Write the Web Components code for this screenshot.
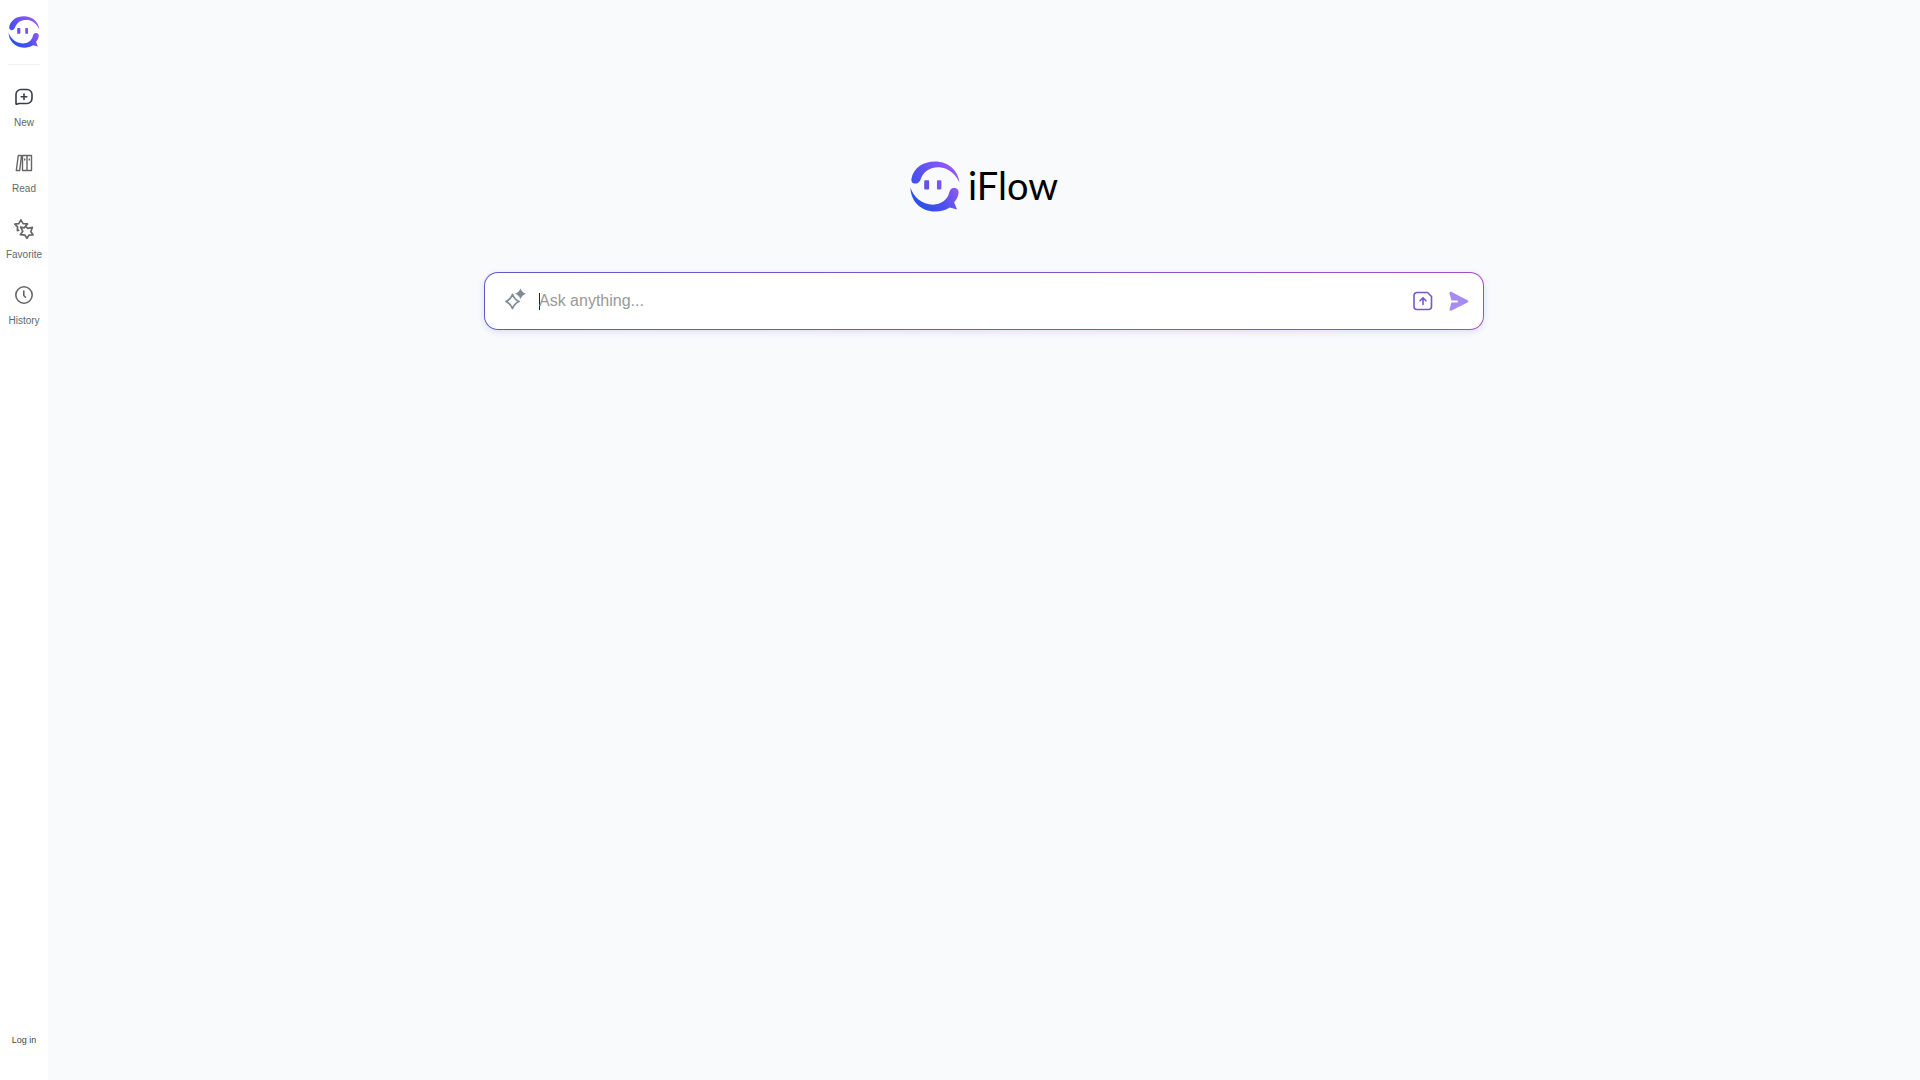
<!DOCTYPE html>
<html lang="en">
<head>
<meta charset="utf-8">
<title>iFlow</title>
<style>
 body {
  margin: 0;
  background: #f8fafc;
  color: #666;
  font-family: "Liberation Sans", Arial, sans-serif;
 }
</style>
</head>
<body>
<app-shell>
 <side-bar slot="side">
  <side-item label="New">
   <svg viewBox="0 0 20 20" fill="none" stroke="#3b3d45" stroke-width="1.6" stroke-linecap="round" stroke-linejoin="round"><path d="M2 17V7.500a5 5 0 0 1 5-5h6a5 5 0 0 1 5 5v4a5 5 0 0 1-5 5H4.500Q3.500 17.500 2 17zM10 7v5.500M7.200 9.700h5.600"/></svg>
  </side-item>
  <side-item label="Read">
   <svg viewBox="0 0 20 20" fill="none" stroke="#666" stroke-width="1.4" stroke-linejoin="round"><path d="M4.300 2.500h3.200L5.700 17.500H2.300zM8.500 2.500h4.500v15H8.500zM13 2.500h4.500v15H13z"/><path d="M10.700 5.500v2M15.300 5.500v2"/></svg>
  </side-item>
  <side-item label="Favorite">
   <svg viewBox="0 0 20 20" fill="none" stroke="#666" stroke-width="1.7" stroke-linejoin="round"><path d="M5.300 11 3.400 11.600 3.500 7.800.8 5.200l3.900-.6L6.900 1l2.200 3.600 4.400.3-2 2.400"/><path d="m11.500 7.300 2.300 2 4.600-1-1.600 4.400 2.300 3.200-4.200.3-1.800 3.200-2.300-3.300-4.500-.4 2.500-3.400-2.200-4.200 3.500.8z"/></svg>
  </side-item>
  <side-item label="History">
   <svg viewBox="0 0 20 20" fill="none" stroke="#666" stroke-width="1.6" stroke-linecap="round" stroke-linejoin="round"><circle cx="10" cy="10" r="8.200"/><path d="M9.800 6v4.500l1.700 1.700"/></svg>
  </side-item>
 </side-bar>
 <brand-logo>iFlow</brand-logo>
 <ask-box placeholder="Ask anything..."></ask-box>
</app-shell>

<script>
// Two-column page frame: sidebar and centred content
class AppShell extends HTMLElement {
 constructor() {
  super();
  this.attachShadow({ mode: 'open' }).innerHTML = `
  <style>
   :host { display: flex; min-height: 100vh; }
   main {
    flex: 1;
    box-sizing: border-box;
    display: flex;
    flex-direction: column;
    align-items: center;
    gap: 60px;
    padding: 161px 24px 24px;
   }
  </style>
  <slot name="side"></slot>
  <main><slot></slot></main>
  `;
 }
}

// Smiling bubble mark, sized by its host
class BrandMark extends HTMLElement {
 constructor() {
  super();
  this.attachShadow({ mode: 'open' }).innerHTML = `
  <style>
   :host { display: block; }
   svg { display: block; width: 100%; height: 100%; }
  </style>
  <svg viewBox="0 0 50 52" aria-hidden="true">
   <defs>
    <linearGradient id="top" gradientUnits="userSpaceOnUse" x1="4" y1="22" x2="38" y2="4">
     <stop offset="0" stop-color="#4350f0"/><stop offset="1" stop-color="#9158f5"/>
    </linearGradient>
    <linearGradient id="low" gradientUnits="userSpaceOnUse" x1="12" y1="48" x2="48" y2="30">
     <stop offset="0" stop-color="#2f50ea"/><stop offset=".5" stop-color="#4a50ee"/><stop offset="1" stop-color="#8d58f0"/>
    </linearGradient>
   </defs>
   <path fill="url(#top)" d="M1 18C3 7 13 .5 25 .5 38 .5 48.500 9 50 22 46 13 39 7.500 31 6.500 21 5.500 14 10 11 17 10 20 8.500 23 5 23 2 23 .5 21 1 18z"/>
   <path fill="url(#low)" d="M0 27C3 37 12 44.500 23 44.500 31 44.500 37 40 39 34 40 30 41 27.500 44.500 27.500 48 27.500 49.500 30 49 33 48.500 37 46.500 40 44.500 42L47.500 49.500 40 47.500C36 50 31 51.500 25 51.500 11 51.500 0 41 0 27z"/>
   <rect x="14" y="19.500" width="5" height="9.500" rx="1" fill="#6553e8"/>
   <rect x="27" y="19.500" width="4.500" height="9.500" rx="1" fill="#7855ee"/>
  </svg>
  `;
 }
}

class BrandLogo extends HTMLElement {
 constructor() {
  super();
  this.attachShadow({ mode: 'open' }).innerHTML = `
  <style>
   :host { display: block; }
   h1 {
    display: flex;
    align-items: center;
    gap: 8px;
    margin: 0;
    color: #000;
    font: 400 38px/48px Lato, sans-serif;
   }
   brand-mark { width: 50px; height: 51px; }
   span { margin-bottom: 3px; }
  </style>
  <h1><brand-mark></brand-mark><span><slot></slot></span></h1>
  `;
 }
}

class SideBar extends HTMLElement {
 constructor() {
  super();
  this.attachShadow({ mode: 'open' }).innerHTML = `
  <style>
   :host {
    display: flex;
    flex-direction: column;
    align-items: center;
    box-sizing: border-box;
    width: 48px;
    padding: 16px 0 32px;
    background: #fff;
   }
   .home brand-mark { width: 32px; height: 32px; }
   hr {
    width: 32px;
    margin: 16px 0 22px;
    border: 0;
    border-top: 1px solid #eef0f3;
   }
   nav { display: flex; flex-direction: column; gap: 22px; }
   .login {
    margin-top: auto;
    padding: 0;
    border: 0;
    background: none;
    color: #444;
    font: 9px/16px "Liberation Sans", Arial, sans-serif;
    cursor: pointer;
   }
  </style>
  <a class="home" href="#" aria-label="Home"><brand-mark></brand-mark></a>
  <hr>
  <nav><slot></slot></nav>
  <button class="login" type="button">Log in</button>
  `;
 }
}

class SideItem extends HTMLElement {
 constructor() {
  super();
  this.attachShadow({ mode: 'open' }).innerHTML = `
  <style>
   :host { display: block; }
   a {
    display: flex;
    flex-direction: column;
    align-items: center;
    gap: 8px;
    color: inherit;
    font-size: 10px;
    line-height: 16px;
    text-decoration: none;
   }
   a:hover { color: #222; }
   ::slotted(svg) { display: block; width: 20px; height: 20px; }
  </style>
  <a href="#"><slot></slot><span></span></a>
  `;
  this.shadowRoot.querySelector('span').textContent = this.getAttribute('label');
 }
}

class AskBox extends HTMLElement {
 constructor() {
  super();
  this.attachShadow({ mode: 'open' }).innerHTML = `
  <style>
   :host { display: block; width: 100%; max-width: 1000px; }
   form {
    display: flex;
    align-items: center;
    box-sizing: border-box;
    min-height: 58px;
    padding: 0 14px 0 19px;
    border: 1px solid transparent;
    border-radius: 14px;
    background:
     linear-gradient(#fff, #fff) padding-box,
     linear-gradient(90deg, #5f58cc, #a050c4) border-box;
    box-shadow: 0 2px 6px rgba(90, 80, 200, .16);
   }
   svg { display: block; }
   .spark { width: 22px; height: 24px; margin: 0 13px 4px 0; }
   input {
    flex: 1;
    min-width: 0;
    padding: 0;
    border: 0;
    outline: 0;
    background: none;
    color: #222;
    font: 16px/20px "Liberation Sans", Arial, sans-serif;
   }
   /* text cursor of the empty field */
   input:placeholder-shown {
    background: linear-gradient(#222, #222) 0 2px / 1px 17px no-repeat;
    caret-color: transparent;
   }
   input::placeholder { color: #999; opacity: 1; }
   .tools { display: flex; align-items: center; gap: 16px; }
   button { padding: 0; border: 0; background: none; cursor: pointer; }
   button svg { width: 20px; height: 20px; }
  </style>
  <form>
   <svg class="spark" viewBox="0 0 22 24" aria-hidden="true">
    <path d="M8.500 7.500Q10.500 12.500 15 14.500 10.500 16.500 8.500 21.500 6.500 16.500 2 14.500 6.500 12.500 8.500 7.500z" fill="none" stroke="#7f8b98" stroke-width="1.800" stroke-linejoin="round"/>
    <path d="M16.500 1.500Q18 5.500 22 6.700 18 8 16.500 12 15 8 11 6.700 15 5.500 16.500 1.500z" fill="#7f8b98"/>
   </svg>
   <input type="text" aria-label="Ask anything">
   <div class="tools">
    <button type="button" aria-label="Upload file">
     <svg viewBox="0 0 20 20" fill="none" stroke="#7659cf" stroke-width="1.600" stroke-linecap="round" stroke-linejoin="round"><path d="M4 1.500h10.500l4 4V15.500a3 3 0 0 1-3 3H4a3 3 0 0 1-3-3v-11a3 3 0 0 1 3-3z"/><path d="M10 13.500V7M7 9.700l3-3 3 3"/></svg>
    </button>
    <button type="submit" aria-label="Send">
     <svg viewBox="0 0 20 20" fill="#a78bf5"><path d="M.5 2.500C.3 1 1.400.4 2.700 1L18.500 9.200q1.700 1.200 0 2.400L2.700 19.600C1.400 20.200.3 19.500.6 18.200L2.400 11.400H8q1-.1 1-1t-1-1H2.400z"/></svg>
    </button>
   </div>
  </form>
  `;
  this.shadowRoot.querySelector('input').placeholder = this.getAttribute('placeholder');
  this.shadowRoot.querySelector('form').addEventListener('submit', this._handleSubmit.bind(this));
 }

 _handleSubmit(event) {
  event.preventDefault();
  const value = this.shadowRoot.querySelector('input').value.trim();
  if (!value) return;
  this.dispatchEvent(new CustomEvent('ask', { detail: { value } }));
 }
}

customElements.define('app-shell', AppShell);
customElements.define('brand-mark', BrandMark);
customElements.define('brand-logo', BrandLogo);
customElements.define('side-bar', SideBar);
customElements.define('side-item', SideItem);
customElements.define('ask-box', AskBox);
</script>
</body>
</html>
